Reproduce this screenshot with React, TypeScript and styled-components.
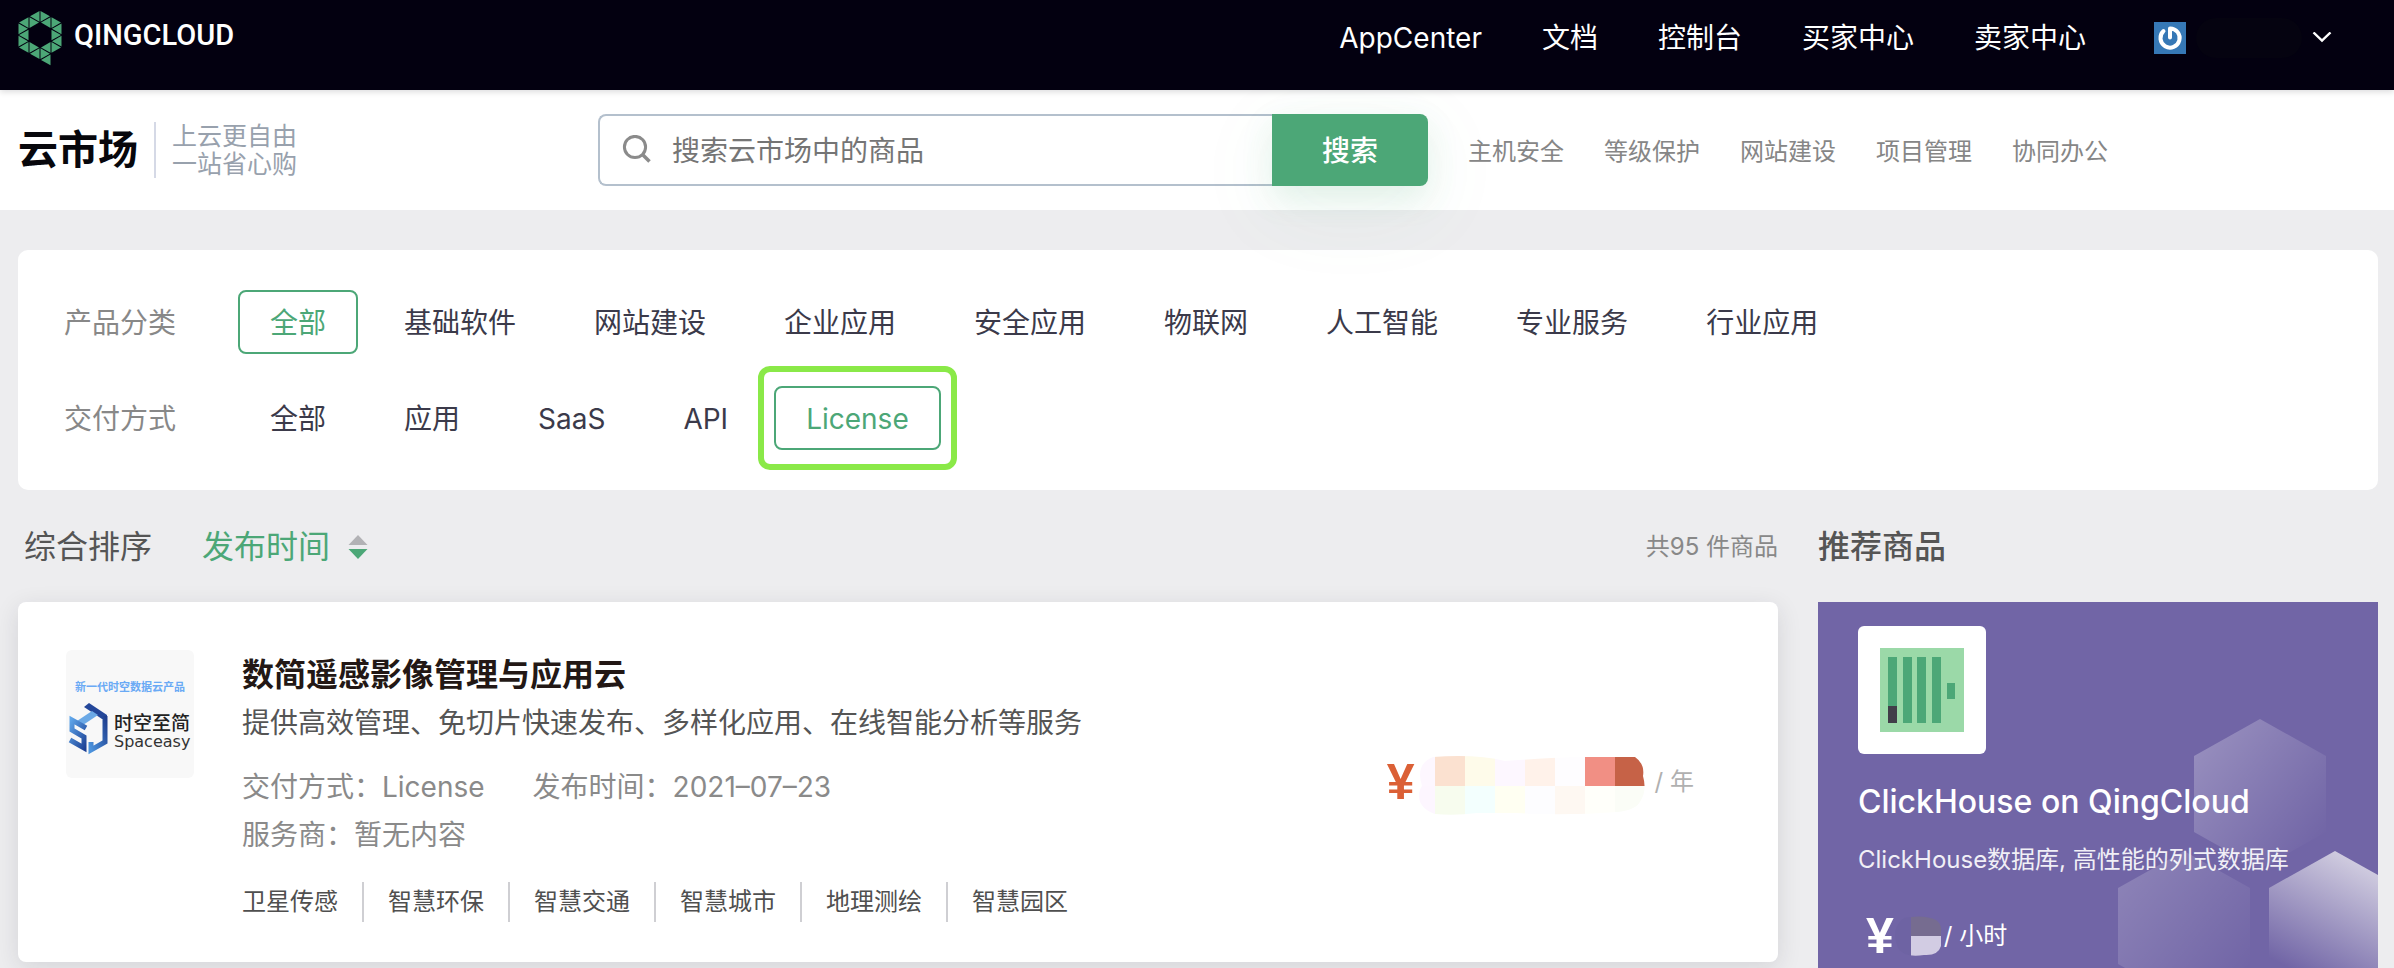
import React from "react";
import styled, { createGlobalStyle } from "styled-components";

const green = "#4ca777";

const GlobalStyle = createGlobalStyle`
  *, *::before, *::after { box-sizing: border-box; }
  body {
    margin: 0;
    background: #ededef;
    font-family: Inter, "Noto Sans CJK SC", sans-serif;
    font-size: 28px;
    line-height: 40px;
    color: #3b3a4a;
  }
  button, input { font: inherit; color: inherit; }
  h1, h2, h3, p, ul { margin: 0; padding: 0; }
  a { color: inherit; text-decoration: none; }
`;

const Page = styled.div`
  min-height: 100vh;
  display: flex;
  flex-direction: column;
`;

/* Top bar */

const TopBar = styled.header`
  display: flex;
  align-items: center;
  justify-content: space-between;
  height: 90px;
  padding: 0 62px 14px 18px;
  background: #030010;
  color: #fff;
  position: relative;
  z-index: 3;
  box-shadow: 0 2px 6px rgba(3, 0, 16, 0.14);
`;

const Logo = styled.a`
  display: flex;
  align-items: center;
  gap: 12px;
`;

const Wordmark = styled.span`
  font-family: Roboto, sans-serif;
  font-size: 29px;
  font-weight: 500;
  line-height: 40px;
  padding-bottom: 6px;
`;

const TopNav = styled.nav`
  display: flex;
  align-items: center;
  gap: 60px;
`;

const Account = styled.button`
  display: flex;
  align-items: center;
  gap: 10px;
  margin-left: 8px;
  padding: 0;
  border: 0;
  background: none;
`;

const HiddenName = styled.span`
  width: 106px;
  height: 40px;
  border-radius: 20px;
  background: #050310;
`;

/* Brand and search bar */

const BrandBar = styled.div`
  display: flex;
  align-items: center;
  height: 120px;
  padding: 0 18px;
  background: #fff;
  position: relative;
  z-index: 2;
`;

const Brand = styled.div`
  display: flex;
  align-items: center;
  width: 580px;
  flex: none;
`;

const BrandName = styled.h1`
  font-size: 40px;
  line-height: 56px;
  font-weight: 700;
  color: #07070c;
`;

const Slogan = styled.p`
  margin-left: 16px;
  padding-left: 16px;
  border-left: 2px solid #d5d9e6;
  font-size: 25px;
  line-height: 28px;
  color: #98a1ad;
`;

const SearchForm = styled.form`
  display: flex;
  width: 830px;
  height: 72px;
`;

const SearchField = styled.label`
  display: flex;
  align-items: center;
  gap: 20px;
  flex: 1;
  padding-left: 22px;
  border: 2px solid #b4c0cd;
  border-right: 0;
  border-radius: 8px 0 0 8px;
  background: #fff;
`;

const SearchInput = styled.input`
  flex: 1;
  min-width: 0;
  padding: 2px 0 0;
  border: 0;
  outline: 0;
  background: none;
  &::placeholder { color: #757575; opacity: 1; }
`;

const SearchButton = styled.button`
  width: 156px;
  padding: 2px 0 0;
  border: 0;
  border-radius: 0 8px 8px 0;
  background: ${green};
  color: #fff;
  font-weight: 500;
  box-shadow: 0 12px 32px rgba(76, 167, 119, 0.14), 0 20px 90px rgba(76, 167, 119, 0.07);
`;

const HotLinks = styled.nav`
  display: flex;
  gap: 40px;
  margin-left: 40px;
  padding-top: 4px;
  font-size: 24px;
  color: #868686;
`;

/* Filters */

const Main = styled.main`
  flex: 1;
  display: flex;
  flex-direction: column;
  padding: 40px 16px 0 18px;
`;

const FilterCard = styled.section`
  display: flex;
  flex-direction: column;
  gap: 32px;
  padding: 40px 46px;
  border-radius: 10px;
  background: #fff;
`;

const FilterRow = styled.div`
  display: flex;
  align-items: center;
`;

const FilterLabel = styled.span`
  width: 174px;
  padding-top: 2px;
  color: #888;
`;

const FilterOptions = styled.div`
  display: flex;
  gap: 14px;
`;

const FilterOption = styled.button<{ $active?: boolean }>`
  position: relative;
  height: 64px;
  padding: 2px 30px 0;
  border: 2px solid ${(p) => (p.$active ? green : "transparent")};
  border-radius: 8px;
  background: none;
  color: ${(p) => (p.$active ? green : "#3b3a4a")};
`;

const Highlight = styled.span`
  position: absolute;
  inset: -22px -18px;
  border: 6px solid #8ae948;
  border-radius: 12px;
`;

/* Product list */

const Columns = styled.div`
  flex: 1;
  display: grid;
  grid-template-columns: minmax(0, 1fr) 560px;
  gap: 40px;
`;

const Column = styled.section`
  display: flex;
  flex-direction: column;
`;

const ColumnHead = styled.div`
  display: flex;
  align-items: center;
  height: 112px;
  padding-top: 2px;
  font-size: 32px;
  line-height: 48px;
  color: #555;
`;

const SortButton = styled.button<{ $active?: boolean }>`
  display: flex;
  align-items: center;
  gap: 18px;
  margin-right: 44px;
  padding: 0 0 0 6px;
  border: 0;
  background: none;
  color: ${(p) => (p.$active ? green : "#555")};
`;

const Count = styled.span`
  margin-left: auto;
  font-size: 24px;
  color: #888;
`;

const RecommendTitle = styled.h2`
  font-size: 32px;
  line-height: 48px;
  font-weight: 500;
`;

const ProductCard = styled.article`
  display: flex;
  align-items: flex-start;
  gap: 48px;
  height: 360px;
  margin-bottom: 6px;
  padding: 48px 84px 0 48px;
  border-radius: 8px;
  background: #fff;
  box-shadow: 0 6px 24px rgba(30, 30, 50, 0.12);
`;

const Tile = styled.div<{ $bg: string }>`
  flex: none;
  width: 128px;
  height: 128px;
  border-radius: 6px;
  background: ${(p) => p.$bg};
`;

const ProductInfo = styled.div`
  flex: 1;
  padding-top: 1px;
`;

const ProductTitle = styled.h3`
  font-size: 32px;
  line-height: 48px;
  font-weight: 700;
  color: #231815;
`;

const ProductText = styled.p`
  line-height: 48px;
  color: #555;
`;

const MetaList = styled.div`
  display: flex;
  flex-wrap: wrap;
  column-gap: 48px;
  margin-top: 16px;
  line-height: 48px;
  color: #8a8a8a;
`;

const MetaBreak = styled.span`
  flex-basis: 100%;
`;

const Tags = styled.ul`
  display: flex;
  margin-top: 23px;
  list-style: none;
  font-size: 24px;
  color: #4f4f4f;
`;

const Tag = styled.li`
  & + & {
    margin-left: 24px;
    padding-left: 24px;
    border-left: 2px solid #cfcfd3;
  }
`;

const Price = styled.div`
  display: flex;
  align-items: center;
  height: 60px;
`;

const Currency = styled.span`
  font-family: "Liberation Sans", sans-serif;
  font-size: 50px;
  line-height: 60px;
  font-weight: 700;
`;

const Unit = styled.span`
  font-size: 24px;
`;

const ListPrice = styled(Price)`
  margin-top: 106px;
  color: #b0b0b0;

  ${Currency} {
    padding: 0 2px 8px 0;
    color: #db6036;
  }

  ${Unit} {
    padding-bottom: 8px;
    margin-left: 10px;
  }
`;

/* Recommended product */

const RecommendCard = styled.article`
  flex: 1;
  position: relative;
  overflow: hidden;
  padding: 24px 40px 0;
  background: #7165a6;
  color: #fff;
`;

const Backdrop = styled.svg`
  position: absolute;
  top: 0;
  right: 0;
`;

const RecommendBody = styled.div`
  position: relative;
`;

const RecommendName = styled.h3`
  margin-top: 24px;
  font-size: 32px;
  line-height: 48px;
  font-weight: 500;
`;

const RecommendText = styled.p`
  margin: 14px 0 34px;
  font-size: 24px;
  line-height: 40px;
  opacity: 0.9;
`;

const RecommendPrice = styled(Price)`
  height: 44px;
  padding-left: 8px;
`;

/* Drawings */

function QingMark() {
  const w = 11;
  const a = 12;
  const cx = 22;
  const cy = 26;
  const triangles: number[][][] = [];
  for (let k = -2; k < 2; k++) {
    for (let j = -6; j <= 6; j++) {
      const y = (j * a) / 2;
      const left = Math.abs(j + k) % 2 === 0;
      const t = left
        ? [[k * w, y], [(k + 1) * w, y - a / 2], [(k + 1) * w, y + a / 2]]
        : [[(k + 1) * w, y], [k * w, y - a / 2], [k * w, y + a / 2]];
      const mx = (t[0][0] + t[1][0] + t[2][0]) / 3;
      const my = (t[0][1] + t[1][1] + t[2][1]) / 3;
      const inner = Math.hypot(mx, my) < a * 0.8;
      const outer = Math.abs(my) + (Math.abs(mx) * a) / 2 / w > 2 * a;
      if (!inner && !outer) triangles.push(t);
    }
  }
  triangles.push([[0, 2 * a], [w, 1.5 * a], [w, 2.5 * a]]);
  return (
    <svg width="44" height="58" viewBox="0 0 44 58" aria-hidden="true">
      {triangles.map((t, i) => {
        const mx = (t[0][0] + t[1][0] + t[2][0]) / 3;
        const my = (t[0][1] + t[1][1] + t[2][1]) / 3;
        const points = t
          .map(([x, y]) => `${cx + mx + (x - mx) * 0.86},${cy + (my + (y - my) * 0.86) * 1.04}`)
          .join(" ");
        return <polygon key={i} points={points} fill={green} />;
      })}
    </svg>
  );
}

function AvatarIcon() {
  return (
    <svg width="32" height="32" viewBox="0 0 32 32" aria-hidden="true">
      <rect width="32" height="32" fill="#3678b6" />
      <path d="M9.5 9 A9.6 9.6 0 1 0 16 6.4 V15.5" fill="none" stroke="#fff" strokeWidth="4" strokeLinecap="round" strokeLinejoin="round" />
    </svg>
  );
}

function Chevron() {
  return (
    <svg width="20" height="12" viewBox="0 0 20 12" aria-hidden="true">
      <path d="M1.5 0.5 L10 8.5 L18.5 0.5" fill="none" stroke="#fff" strokeWidth="2.4" />
    </svg>
  );
}

function SearchIcon() {
  return (
    <svg width="30" height="30" viewBox="0 0 30 30" aria-hidden="true">
      <circle cx="13" cy="12" r="10.6" fill="none" stroke="#8b8b8b" strokeWidth="3" />
      <path d="M20.5 19.5 L27.5 26.5" stroke="#8b8b8b" strokeWidth="3.6" />
    </svg>
  );
}

function SortArrows() {
  return (
    <svg width="20" height="24" viewBox="0 0 20 24" aria-hidden="true">
      <polygon points="10,0 19.5,10 0.5,10" fill="#b2b2b5" />
      <polygon points="10,24 19.5,14 0.5,14" fill={green} />
    </svg>
  );
}

function SpaceasyLogo() {
  return (
    <svg width="128" height="128" viewBox="0 0 128 128" role="img" aria-label="Spaceasy">
      <defs>
        <linearGradient id="cubeLeft" x1="0" y1="0" x2="1" y2="1">
          <stop offset="0" stopColor="#5fa6ea" />
          <stop offset="1" stopColor="#1b3f93" />
        </linearGradient>
        <linearGradient id="cubeRight" x1="1" y1="0" x2="0" y2="1">
          <stop offset="0" stopColor="#1f3f8f" />
          <stop offset="1" stopColor="#4c93dd" />
        </linearGradient>
      </defs>
      <text x="9" y="41" fontSize="11" fontWeight="700" fill="#6aaaf5">新一代时空数据云产品</text>
      <polygon points="18,57 23,53 41,65 41,69 36,69" fill="#24479a" />
      <polygon points="26,61 32,65 17,75 11,71" fill="#6ba9e6" />
      <path d="M20 78 L6 70 V80 L18 87 V98 L4 90" fill="none" stroke="url(#cubeLeft)" strokeWidth="5" />
      <path d="M39 66 V92 L25 100 V92" fill="none" stroke="url(#cubeRight)" strokeWidth="5" />
      <text x="48" y="80" fontSize="19" fontWeight="500" fill="#222">时空至简</text>
      <text x="48" y="97" fontFamily="DejaVu Sans" fontSize="16" fill="#333">Spaceasy</text>
    </svg>
  );
}

function PriceMosaic() {
  const top = ["#fdf7ff", "#fbe1d0", "#fefbea", "#fdf7ff", "#fff2ea", "#fefdff", "#f18f84", "#c66247"];
  const bottom = ["#fdf6ff", "#f7fcee", "#f3fffe", "#fffff2", "#fdfdff", "#fef8f2", "#fffffa", "#fbfdf7"];
  return (
    <svg width="228" height="60" viewBox="0 0 228 60" aria-hidden="true">
      <clipPath id="priceShape">
        <path d="M16 1 Q60 -2 88 5 Q128 2 160 1 H218 Q228 8 226 20 Q230 34 224 44 Q220 54 200 56 Q150 60 100 57 H60 Q38 60 18 58 Q2 52 2 40 Q2 34 5 30 Q-2 8 16 1 Z" />
      </clipPath>
      <g clipPath="url(#priceShape)" shapeRendering="crispEdges">
        {top.map((c, i) => <rect key={i} x={i * 30 - 12} y="0" width="30" height="30" fill={c} />)}
        {bottom.map((c, i) => <rect key={i} x={i * 30 - 12} y="30" width="30" height="30" fill={c} />)}
      </g>
    </svg>
  );
}

function SmallMosaic() {
  return (
    <svg width="50" height="40" viewBox="0 0 50 40" aria-hidden="true">
      <clipPath id="smallShape">
        <path d="M10 2 Q30 -2 42 4 Q48 8 47 16 V30 Q44 40 30 39 Q10 42 4 32 Q-4 12 10 2 Z" />
      </clipPath>
      <g clipPath="url(#smallShape)">
        <rect width="17" height="40" fill="#6e63a3" />
        <rect x="17" width="31" height="20" fill="#766c90" />
        <rect x="17" y="20" width="31" height="20" fill="#d2cce3" />
      </g>
    </svg>
  );
}

function ClickHouseIcon() {
  return (
    <svg width="128" height="128" viewBox="0 0 128 128" aria-hidden="true">
      <rect x="22" y="22" width="84" height="84" fill="#9bd9a8" />
      {[30, 45, 59, 74].map((x) => (
        <rect key={x} x={x} y="31" width="9" height="66" fill={green} />
      ))}
      <rect x="30" y="80" width="9" height="17" fill="#413e49" />
      <rect x="89" y="57" width="8" height="16" fill={green} />
    </svg>
  );
}

function Hexagons() {
  const hex = (x: number, y: number) =>
    `${x},${y} ${x + 66},${y + 37} ${x + 66},${y + 113} ${x},${y + 150} ${x - 66},${y + 113} ${x - 66},${y + 37}`;
  return (
    <Backdrop width="560" height="400" viewBox="0 0 560 400" aria-hidden="true">
      <defs>
        <linearGradient id="hexSoft" x1="0" y1="0.1" x2="0.9" y2="0.9">
          <stop offset="0" stopColor="#fff" stopOpacity="0.28" />
          <stop offset="1" stopColor="#fff" stopOpacity="0" />
        </linearGradient>
        <linearGradient id="hexFaint" x1="0" y1="0.1" x2="0.9" y2="0.9">
          <stop offset="0" stopColor="#fff" stopOpacity="0.2" />
          <stop offset="1" stopColor="#fff" stopOpacity="0" />
        </linearGradient>
        <linearGradient id="hexBright" x1="0.7" y1="0" x2="0.3" y2="0.85">
          <stop offset="0" stopColor="#dedbe8" stopOpacity="0.95" />
          <stop offset="1" stopColor="#dedbe8" stopOpacity="0" />
        </linearGradient>
      </defs>
      <polygon points={hex(442, 117)} fill="url(#hexSoft)" />
      <polygon points={hex(366, 249)} fill="url(#hexFaint)" />
      <polygon points={hex(517, 249)} fill="url(#hexBright)" />
    </Backdrop>
  );
}

/* Page content */

const navItems = ["AppCenter", "文档", "控制台", "买家中心", "卖家中心"];
const hotItems = ["主机安全", "等级保护", "网站建设", "项目管理", "协同办公"];
const categories = ["全部", "基础软件", "网站建设", "企业应用", "安全应用", "物联网", "人工智能", "专业服务", "行业应用"];
const deliveries = ["全部", "应用", "SaaS", "API", "License"];
const tags = ["卫星传感", "智慧环保", "智慧交通", "智慧城市", "地理测绘", "智慧园区"];

export default function App() {
  return (
    <Page>
      <GlobalStyle />
      <TopBar>
        <Logo href="#">
          <QingMark />
          <Wordmark>QINGCLOUD</Wordmark>
        </Logo>
        <TopNav>
          {navItems.map((n) => <a key={n} href="#">{n}</a>)}
          <Account type="button" aria-label="账户">
            <AvatarIcon />
            <HiddenName />
            <Chevron />
          </Account>
        </TopNav>
      </TopBar>

      <BrandBar>
        <Brand>
          <BrandName>云市场</BrandName>
          <Slogan>上云更自由<br />一站省心购</Slogan>
        </Brand>
        <SearchForm onSubmit={(e) => e.preventDefault()}>
          <SearchField>
            <SearchIcon />
            <SearchInput type="text" aria-label="搜索" placeholder="搜索云市场中的商品" />
          </SearchField>
          <SearchButton type="submit">搜索</SearchButton>
        </SearchForm>
        <HotLinks>
          {hotItems.map((n) => <a key={n} href="#">{n}</a>)}
        </HotLinks>
      </BrandBar>

      <Main>
        <FilterCard>
          <FilterRow>
            <FilterLabel>产品分类</FilterLabel>
            <FilterOptions>
              {categories.map((c, i) => (
                <FilterOption key={c} type="button" $active={i === 0}>{c}</FilterOption>
              ))}
            </FilterOptions>
          </FilterRow>
          <FilterRow>
            <FilterLabel>交付方式</FilterLabel>
            <FilterOptions>
              {deliveries.map((d) => (
                <FilterOption key={d} type="button" $active={d === "License"}>
                  {d}
                  {d === "License" && <Highlight />}
                </FilterOption>
              ))}
            </FilterOptions>
          </FilterRow>
        </FilterCard>

        <Columns>
          <Column>
            <ColumnHead>
              <SortButton type="button">综合排序</SortButton>
              <SortButton type="button" $active>
                发布时间
                <SortArrows />
              </SortButton>
              <Count>共95 件商品</Count>
            </ColumnHead>
            <ProductCard>
              <Tile $bg="#f8f8f8"><SpaceasyLogo /></Tile>
              <ProductInfo>
                <ProductTitle>数简遥感影像管理与应用云</ProductTitle>
                <ProductText>提供高效管理、免切片快速发布、多样化应用、在线智能分析等服务</ProductText>
                <MetaList>
                  <span>交付方式：License</span>
                  <span>发布时间：2021–07–23</span>
                  <MetaBreak>服务商：暂无内容</MetaBreak>
                </MetaList>
                <Tags>
                  {tags.map((t) => <Tag key={t}>{t}</Tag>)}
                </Tags>
              </ProductInfo>
              <ListPrice>
                <Currency>¥</Currency>
                <PriceMosaic />
                <Unit>/ 年</Unit>
              </ListPrice>
            </ProductCard>
          </Column>

          <Column>
            <ColumnHead>
              <RecommendTitle>推荐商品</RecommendTitle>
            </ColumnHead>
            <RecommendCard>
              <Hexagons />
              <RecommendBody>
                <Tile $bg="#fff"><ClickHouseIcon /></Tile>
                <RecommendName>ClickHouse on QingCloud</RecommendName>
                <RecommendText>ClickHouse数据库, 高性能的列式数据库</RecommendText>
                <RecommendPrice>
                  <Currency>¥</Currency>
                  <SmallMosaic />
                  <Unit>/ 小时</Unit>
                </RecommendPrice>
              </RecommendBody>
            </RecommendCard>
          </Column>
        </Columns>
      </Main>
    </Page>
  );
}
